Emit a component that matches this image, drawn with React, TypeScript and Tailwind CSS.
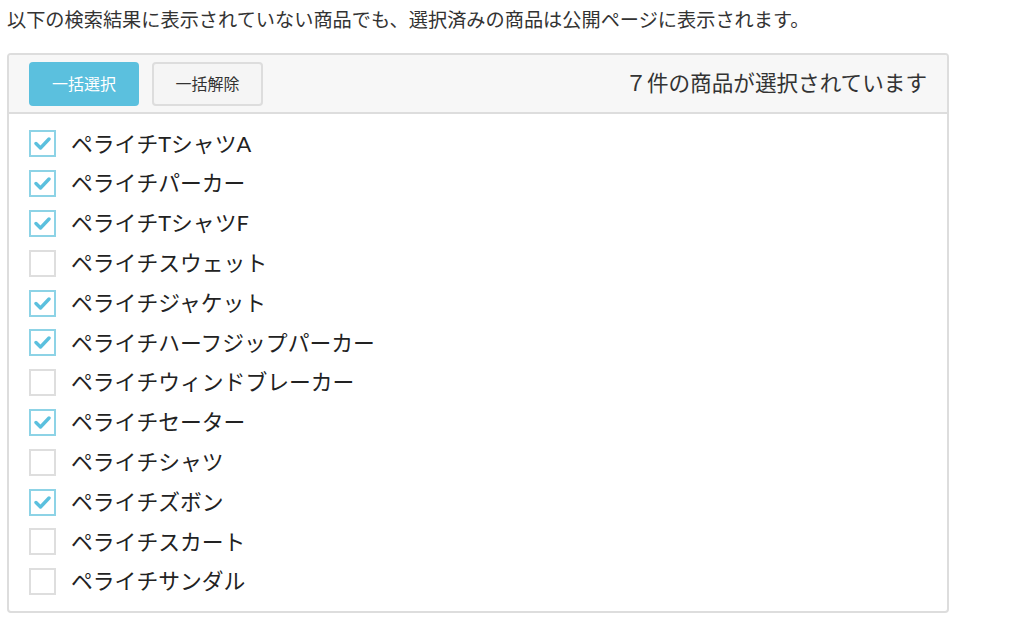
import React, { useState } from 'react';

const PRODUCTS: { name: string; checked: boolean }[] = [
  { name: 'ペライチTシャツA', checked: true },
  { name: 'ペライチパーカー', checked: true },
  { name: 'ペライチTシャツF', checked: true },
  { name: 'ペライチスウェット', checked: false },
  { name: 'ペライチジャケット', checked: true },
  { name: 'ペライチハーフジップパーカー', checked: true },
  { name: 'ペライチウィンドブレーカー', checked: false },
  { name: 'ペライチセーター', checked: true },
  { name: 'ペライチシャツ', checked: false },
  { name: 'ペライチズボン', checked: true },
  { name: 'ペライチスカート', checked: false },
  { name: 'ペライチサンダル', checked: false },
];

// 数字を全角に
const toWide = (n: number) => String(n).replace(/[0-9]/g, d => String.fromCharCode(d.charCodeAt(0) + 0xfee0));

const CheckBox: React.FC<{ checked: boolean; onClick: () => void }> = ({ checked, onClick }) => (
  <button
    type="button"
    onClick={onClick}
    className={`w-[27px] h-[27px] flex items-center justify-center border-2 bg-white shrink-0 ${checked ? 'border-[#8dd3e6]' : 'border-[#dedede]'}`}
  >
    {checked && (
      <svg width="17" height="13" viewBox="0 0 17 13">
        <path d="M2 6.5 L6.5 11 L15 2" fill="none" stroke="#5bc0de" strokeWidth="3.4" strokeLinecap="round" strokeLinejoin="round" />
      </svg>
    )}
  </button>
);

export default function App() {
  const [items, setItems] = useState(PRODUCTS);
  const count = items.filter(i => i.checked).length;

  const toggle = (idx: number) => {
    setItems(items.map((it, i) => (i === idx ? { ...it, checked: !it.checked } : it)));
  };

  return (
    <div className="w-[1024px] h-[644px] bg-white text-[#333] font-['Lato','Noto_Sans_CJK_JP',sans-serif]">
      <p className="pl-[7px] pt-[7px] text-[19.2px] leading-[26px] text-[#333]">
        以下の検索結果に表示されていない商品でも、選択済みの商品は公開ページに表示されます。
      </p>
      <div className="ml-[7px] mt-[20px] w-[942px] border-2 border-[#dddddd] rounded-[4px] overflow-hidden">
        <div className="h-[59px] bg-[#f7f7f7] border-b-2 border-[#dddddd] flex items-center pl-[20px] pr-[20px]">
          <button
            type="button"
            onClick={() => setItems(items.map(i => ({ ...i, checked: true })))}
            className="w-[110px] h-[44px] rounded-[4px] bg-[#5bc0de] text-white text-[16px]"
          >
            一括選択
          </button>
          <button
            type="button"
            onClick={() => setItems(items.map(i => ({ ...i, checked: false })))}
            className="ml-[13px] w-[111px] h-[44px] rounded-[4px] bg-[#f5f5f5] border-2 border-[#dddddd] text-[#333] text-[16px]"
          >
            一括解除
          </button>
          <span className="ml-auto text-[21.6px] text-[#333]">{toWide(count)}件の商品が選択されています</span>
        </div>
        <ul className="pt-[10px] pb-[9px] pl-[20px]">
          {items.map((it, idx) => (
            <li key={it.name} className="h-[39.8px] flex items-center">
              <CheckBox checked={it.checked} onClick={() => toggle(idx)} />
              <span className="ml-[15px] text-[21.8px] text-[#222]">{it.name}</span>
            </li>
          ))}
        </ul>
      </div>
    </div>
  );
}
